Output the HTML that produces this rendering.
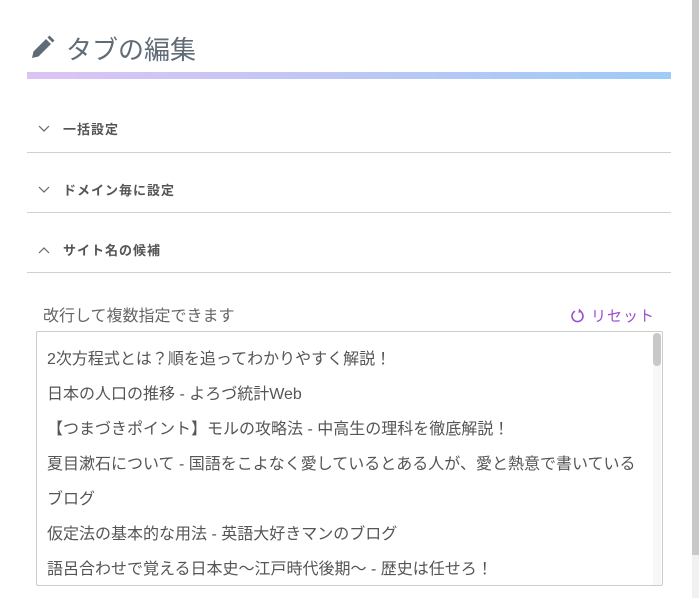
<!DOCTYPE html>
<html><head><meta charset="utf-8"><style>
*{margin:0;padding:0;box-sizing:border-box}
html,body{width:699px;height:598px;overflow:hidden;background:#fff;font-family:"Liberation Sans","Noto Sans CJK JP",sans-serif;color:#555}
.sb{position:absolute;right:0;top:0;width:7px;height:598px;background:#f1f1f1}
.sb div{position:absolute;left:0;top:0;width:7px;height:555px;background:#c8c8c8}
h1{position:absolute;left:66px;top:30px;font-size:26px;font-weight:normal;color:#5f6b76}
.pen{position:absolute;left:31px;top:35px}
.bar{position:absolute;left:27px;top:72px;width:644px;height:7px;background:linear-gradient(90deg,#dcc3f5,#9ecbf7)}
.acc{position:absolute;left:27px;width:644px;height:61px;border-bottom:1px solid #d0d0d0}
.acc span{position:absolute;left:36px;top:27px;font-size:13px;font-weight:bold;color:#555;letter-spacing:1px}
.acc svg{position:absolute;left:11px;top:33px}
.hint{position:absolute;left:43px;top:302px;font-size:16px;color:#666}
.reset{position:absolute;left:571px;top:305px;font-size:15px;color:#9b4fd0;letter-spacing:1px}
.reset svg{position:absolute;left:0;top:3px}
.reset span{margin-left:20px}
.ta{position:absolute;left:36px;top:331px;width:627px;height:255px;border:1px solid #ccc;border-radius:2px;overflow:hidden}
.ta p{position:absolute;left:10px;font-size:16px;color:#555;white-space:nowrap}
.tsb{position:absolute;right:1px;top:1px;width:8px;height:252px;background:#f7f7f7}
.tsb div{width:8px;height:33px;background:#c8c8c8;border-radius:4px}
</style></head><body>
<div class="sb"><div></div></div>
<svg class="pen" width="24" height="24" viewBox="0 0 24 24"><path fill="#5f6b76" d="M1 23l1.5-6.5L15 4l5 5L7.5 21.5z M16.5 2.5l2-2 5 5-2 2z"/></svg>
<h1>タブの編集</h1>
<div class="bar"></div>
<div class="acc" style="top:92px"><svg width="12" height="8" viewBox="0 0 12 8"><path d="M1 1l5 5 5-5" fill="none" stroke="#666" stroke-width="1.2"/></svg><span>一括設定</span></div>
<div class="acc" style="top:153px;height:60px"><svg width="12" height="8" viewBox="0 0 12 8"><path d="M1 1l5 5 5-5" fill="none" stroke="#666" stroke-width="1.2"/></svg><span>ドメイン毎に設定</span></div>
<div class="acc" style="top:213px;height:60px"><svg width="12" height="8" viewBox="0 0 12 8"><path d="M1 7l5-5 5 5" fill="none" stroke="#666" stroke-width="1.2"/></svg><span>サイト名の候補</span></div>
<div class="hint">改行して複数指定できます</div>
<div class="reset"><svg width="14" height="15" viewBox="0 0 14 15"><path d="M9.5 3.5A5.5 5.5 0 1 1 4 3.2" fill="none" stroke="#9b4fd0" stroke-width="1.6"/><path d="M8 0.5l3 3-3.5 1.5z" fill="#9b4fd0"/></svg><span>リセット</span></div>
<div class="ta">
<p style="top:13px">2次方程式とは？順を追ってわかりやすく解説！</p>
<p style="top:48px">日本の人口の推移 - よろづ統計Web</p>
<p style="top:83px">【つまづきポイント】モルの攻略法 - 中高生の理科を徹底解説！</p>
<p style="top:118px">夏目漱石について - 国語をこよなく愛しているとある人が、愛と熱意で書いている</p>
<p style="top:153px">ブログ</p>
<p style="top:188px">仮定法の基本的な用法 - 英語大好きマンのブログ</p>
<p style="top:223px">語呂合わせで覚える日本史〜江戸時代後期〜 - 歴史は任せろ！</p>
<div class="tsb"><div></div></div>
</div>
</body></html>
